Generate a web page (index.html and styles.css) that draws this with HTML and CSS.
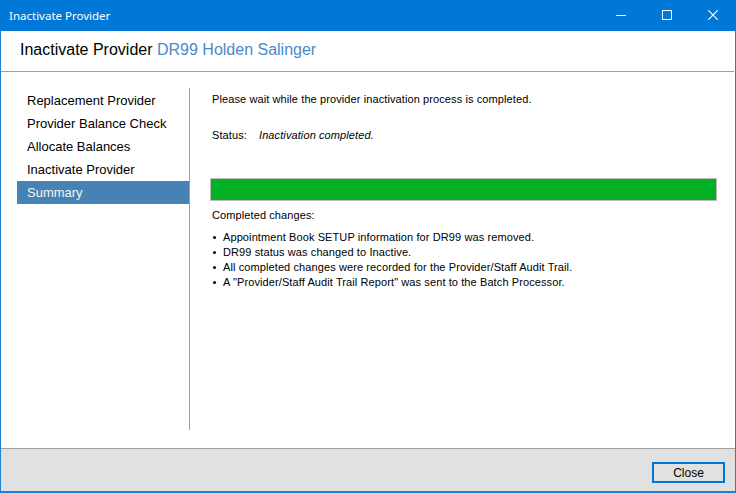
FILE: index.html
```html
<!DOCTYPE html>
<html>
<head>
<meta charset="utf-8">
<link rel="stylesheet" href="styles.css">
</head>
<body>
<div class="window">
  <div class="titlebar">
    <span class="title">Inactivate Provider</span>
    <div class="controls">
      <span class="ctl"><svg width="10" height="10" viewBox="0 0 10 10"><path d="M0 5.5H10" stroke="#fff" stroke-width="1"/></svg></span>
      <span class="ctl"><svg width="10" height="10" viewBox="0 0 10 10"><rect x="0.5" y="0.5" width="9" height="9" fill="none" stroke="#fff" stroke-width="1"/></svg></span>
      <span class="ctl"><svg width="10" height="10" viewBox="0 0 10 10"><path d="M0.3 0.3L9.7 9.7M9.7 0.3L0.3 9.7" stroke="#fff" stroke-width="1.1"/></svg></span>
    </div>
  </div>
  <div class="header">
    <span class="h-main">Inactivate Provider</span> <span class="h-sub">DR99 Holden Salinger</span>
  </div>
  <div class="main">
    <div class="nav">
      <div class="nav-item">Replacement Provider</div>
      <div class="nav-item">Provider Balance Check</div>
      <div class="nav-item">Allocate Balances</div>
      <div class="nav-item">Inactivate Provider</div>
      <div class="nav-item selected">Summary</div>
    </div>
    <div class="divider"></div>
    <div class="content">
      <div class="line intro">Please wait while the provider inactivation process is completed.</div>
      <div class="line status"><span class="status-label">Status:</span><span class="status-value">Inactivation completed.</span></div>
      <div class="progress"><div class="progress-fill"></div></div>
      <div class="line changes">Completed changes:</div>
      <ul class="bullets">
        <li>Appointment Book SETUP information for DR99 was removed.</li>
        <li>DR99 status was changed to Inactive.</li>
        <li>All completed changes were recorded for the Provider/Staff Audit Trail.</li>
        <li>A "Provider/Staff Audit Trail Report" was sent to the Batch Processor.</li>
      </ul>
    </div>
  </div>
  <div class="footer">
    <button class="btn">Close</button>
  </div>
</div>
</body>
</html>
```
FILE: styles.css
```css
* { box-sizing: border-box; }
html, body { margin: 0; padding: 0; background: #fff; }
.window {
  width: 736px;
  height: 493px;
  border: 1px solid #1883d7;
  border-top: none;
  display: flex;
  flex-direction: column;
  font-family: "Liberation Sans", Arial, sans-serif;
  color: #000;
}
.titlebar {
  height: 31px;
  background: #0078d7;
  margin: 0 -1px;
  display: flex;
  align-items: center;
  justify-content: space-between;
  color: #fff;
}
.title {
  font-family: "Noto Sans", sans-serif;
  font-size: 11.5px;
  padding-left: 9px;
  padding-bottom: 1px;
}
.controls { display: flex; height: 100%; }
.ctl {
  width: 46px;
  height: 100%;
  display: flex;
  align-items: center;
  justify-content: center;
}
.ctl svg { display: block; margin-bottom: 1px; }
.header {
  height: 41px;
  border-bottom: 1px solid #a0a0a0;
  margin-right: 1px;
  padding: 9px 0 0 19px;
  font-size: 16px;
  line-height: 20px;
}
.h-main { color: #000; }
.h-sub { color: #4a8acb; }
.main {
  display: flex;
  height: 376px;
}
.nav {
  width: 172px;
  margin-left: 16px;
  padding-top: 17px;
  font-size: 13px;
}
.nav-item {
  height: 23px;
  line-height: 23px;
  padding-left: 10px;
}
.nav-item.selected {
  background: #4682b4;
  color: #f4f4f4;
  height: 23px;
}
.divider {
  width: 1px;
  background: #a0a0a0;
  margin-top: 16px;
  height: 342px;
}
.content {
  flex: 1;
  padding: 20px 18px 0 20px;
  font-size: 11px;
  letter-spacing: 0.1px;
}
.line {
  line-height: 15px;
  padding-left: 2px;
}
.status { margin-top: 21px; }
.status-label { display: inline-block; width: 47px; }
.status-value { font-style: italic; }
.progress {
  margin-top: 35px;
  height: 23px;
  border: 1px solid #bcbcbc;
  background: #e6e6e6;
}
.progress-fill {
  height: 100%;
  width: 100%;
  background: #06b025;
}
.changes { margin-top: 7px; }
.bullets {
  list-style: none;
  margin: 7px 0 0 0;
  padding: 0;
}
.bullets li {
  line-height: 15px;
  padding-left: 13px;
  position: relative;
}
.bullets li::before {
  content: "";
  position: absolute;
  left: 3px;
  top: 6px;
  width: 3px;
  height: 3px;
  border-radius: 50%;
  background: #000;
}
.footer {
  flex: 1;
  border-top: 1px solid #a0a0a0;
  background: #e1e1e1;
  display: flex;
  justify-content: flex-end;
  align-items: flex-start;
  padding: 13px 10px 0 0;
  border-bottom: 1px solid #1883d7;
}
.btn {
  width: 73px;
  height: 21px;
  border: 2px solid #0078d7;
  background: #e1e1e1;
  font-family: "Liberation Sans", Arial, sans-serif;
  font-size: 12px;
  color: #000;
  padding: 0;
  margin: 0;
}
```
